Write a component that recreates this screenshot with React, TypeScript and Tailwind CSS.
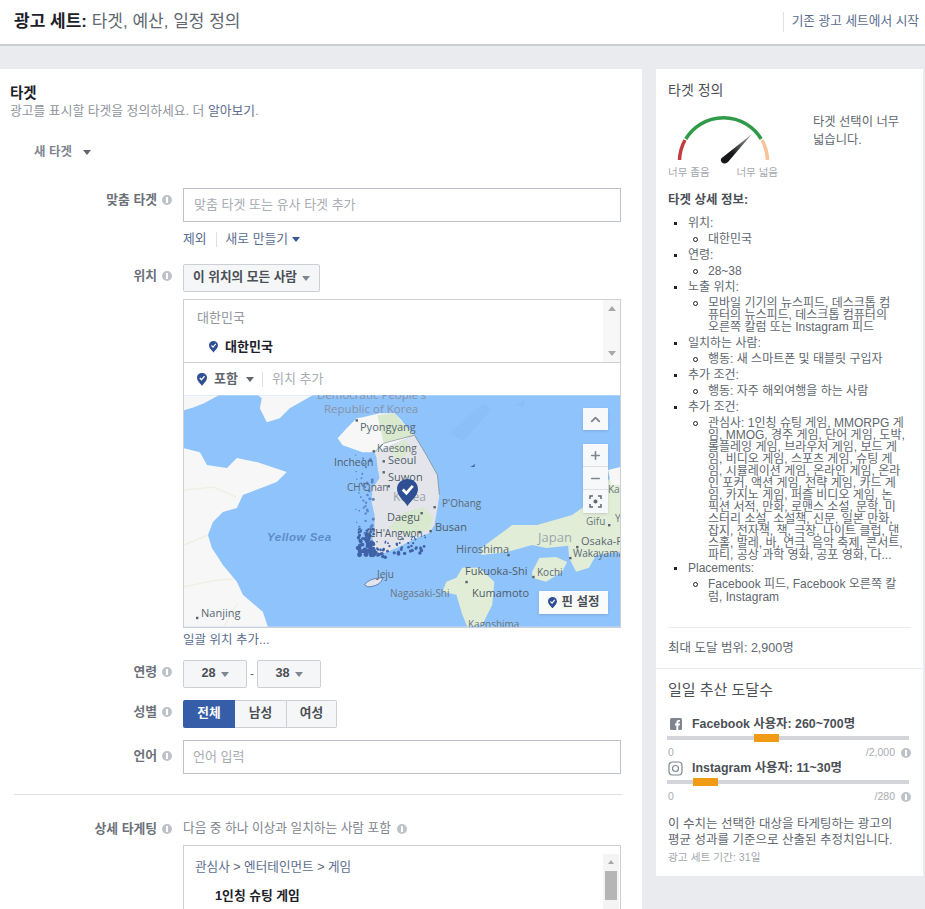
import React from 'react';
import { ChevronUp, Plus, Minus } from 'lucide-react';

const FONT = "font-['Liberation_Sans','Noto_Sans_CJK_KR',sans-serif]";

const Caret = ({ className = 'border-t-[#606770]' }: { className?: string }) => (
  <span className={`inline-block h-0 w-0 border-x-[4.5px] border-t-[5px] border-x-transparent ${className}`} />
);

const Info = ({ className = '' }: { className?: string }) => (
  <span className={`inline-flex h-[10px] w-[10px] shrink-0 items-center justify-center rounded-full bg-[#bec2c9] ${className}`}>
    <span className="h-[6px] w-[2px] bg-white" />
  </span>
);

const Pin = ({ size = 12, color = '#2f4f94' }: { size?: number; color?: string }) => (
  <svg width={size} height={size * 1.3} viewBox="0 0 20 26" className="shrink-0">
    <path d="M10 26 C7.5 21 0 16.5 0 9.5 C0 4 4.5 0 10 0 C15.5 0 20 4 20 9.5 C20 16.5 12.5 21 10 26 Z" fill={color} />
    <path d="M5.5 10 L9 13.5 L15 6.5" fill="none" stroke="#fff" strokeWidth="2.6" />
  </svg>
);

const FieldLabel = ({ text, className = '' }: { text: string; className?: string }) => (
  <div className={`flex w-[173px] shrink-0 items-center justify-end gap-[5px] pr-[11px] text-[12.8px] font-bold text-[#6b7079] ${className}`}>
    <span>{text}</span>
    <Info />
  </div>
);

const SelectButton = ({ text, className = '' }: { text: string; className?: string }) => (
  <div className={`flex h-[28px] items-center justify-center gap-[5px] rounded-[2px] border border-[#ccd0d5] bg-[#f5f6f7] text-[12.7px] font-bold text-[#4b4f56] ${className}`}>
    <span>{text}</span>
    <Caret className="border-t-[#7f8690]" />
  </div>
);

// cy is the vertical centre of the label on the map
const mapLabels = [
  { text: "Democratic People's", x: 133, cy: 1, size: 11.5, color: 'text-[#8793a8]' },
  { text: 'Republic of Korea', x: 140, cy: 15, size: 11.5, color: 'text-[#8793a8]' },
  { text: 'Pyongyang', x: 176, cy: 32, size: 11, color: 'text-[#5a6874]' },
  { text: 'Kaesong', x: 193, cy: 54, size: 10, color: 'text-[#5a6874]' },
  { text: 'Seoul', x: 204, cy: 65, size: 11, color: 'text-[#4f5d68]' },
  { text: 'Incheon', x: 150, cy: 68, size: 10.5, color: 'text-[#4f5d68]' },
  { text: 'Suwon', x: 204, cy: 82, size: 11, color: 'text-[#4f5d68]' },
  { text: "CH'Onan", x: 163, cy: 93, size: 10, color: 'text-[#5a6874]' },
  { text: 'Korea', x: 209, cy: 103, size: 12, color: 'text-[#9aa1ad]' },
  { text: "P'Ohang", x: 258, cy: 109, size: 10, color: 'text-[#5a6874]' },
  { text: 'Daegu', x: 203, cy: 122, size: 11, color: 'text-[#4f5d68]' },
  { text: 'Busan', x: 251, cy: 132, size: 11, color: 'text-[#4f5d68]' },
  { text: "CH'Angwon", x: 185, cy: 139, size: 10, color: 'text-[#4f5d68]' },
  { text: 'Hiroshima', x: 272, cy: 154, size: 11, color: 'text-[#5a6874]' },
  { text: 'Japan', x: 354, cy: 143, size: 13, color: 'text-[#9aa8ac]' },
  { text: 'Osaka-Fu', x: 397, cy: 146, size: 11, color: 'text-[#5a6874]' },
  { text: 'Wakayama', x: 389, cy: 159, size: 10, color: 'text-[#5a6874]' },
  { text: 'Gifu', x: 402, cy: 127, size: 10, color: 'text-[#6a7780]' },
  { text: 'Yo', x: 431, cy: 124, size: 10, color: 'text-[#6a7780]' },
  { text: 'Kanazawa', x: 424, cy: 95, size: 10, color: 'text-[#6a7780]' },
  { text: 'Fukuoka-Shi', x: 281, cy: 176, size: 11, color: 'text-[#4f5d68]' },
  { text: 'Kochi', x: 353, cy: 178, size: 10, color: 'text-[#5a6874]' },
  { text: 'Nagasaki-Shi', x: 206, cy: 199, size: 10, color: 'text-[#6a7780]' },
  { text: 'Kumamoto', x: 288, cy: 198, size: 11, color: 'text-[#4f5d68]' },
  { text: 'Kagoshima', x: 284, cy: 230, size: 10, color: 'text-[#6a7780]' },
  { text: 'Jeju', x: 193, cy: 180, size: 10, color: 'text-[#5a6874]' },
  { text: 'Nanjing', x: 17, cy: 218, size: 11, color: 'text-[#5a6874]' },
];

const mapDots = [
  [173, 25], [190, 56], [200, 66], [200, 77], [205, 91], [238, 118], [251, 112], [247, 136], [236, 137], [13, 223], [283, 187], [325, 160], [394, 152], [387, 163], [350, 182], [426, 130],
];

// scattered islands along the west and south coast of Korea
const islands: number[][] = [];
for (let i = 0; i < 170; i++) {
  const a = Math.abs(Math.sin(i * 12.9898) * 43758.5453) % 1;
  const b = Math.abs(Math.sin(i * 78.233) * 12543.113) % 1;
  if (i < 45) islands.push([172 + a * 18, 60 + b * 80, 0.7 + a * 0.9, 0]);
  else if (i < 115) islands.push([174 + a * 17, 133 + b * 27, 1 + b * 1.5, 1]);
  else islands.push([190 + a * 52, 146 + b * 18 - a * 6, 0.7 + b * 1.1, 1]);
}

const MapBackground = () => (
  <svg viewBox="0 0 437 232" className="absolute inset-0 h-full w-full">
    <rect width="437" height="232" fill="#8fc3fb" />
    {/* china and north korea */}
    <polygon points="0,0 35,0 20,8 10,12 0,15" fill="#f6f7f6" />
    <polygon points="74,0 129,0 106,13 96,23 83,27 76,13 78,3" fill="#f6f7f6" />
    <polygon points="0,53 16,57 23,70 43,73 53,63 73,67 103,77 93,87 59,100 53,113 39,117 29,127 24,140 28,153 39,170 53,187 59,200 79,217 84,232 0,232" fill="#f6f7f6" />
    <path d="M0 95 L30 92 L52 102 M0 150 L24 140 M0 192 L30 186 L50 184 M40 232 L54 208" fill="none" stroke="#edf1e5" strokeWidth="1.5" />
    <polygon points="179,22 196,18 211,18 218,25 224,33 231,40 191,57 179,57 159,50 154,43 163,33 173,23" fill="#f6f7f6" />
    <polygon points="194,20 211,18 224,33 231,40 200,47 197,35" fill="#d9e9cd" />
    {/* south korea */}
    <polygon points="231,40 243,60 254,80 256,100 254,113 251,130 246,138 233,143 213,153 196,160 189,157 189,143 191,133 191,120 188,107 189,93 196,83 194,73 193,63 191,57" fill="#e4e5ea" />
    <polygon points="206,53 222,45 228,55 215,65" fill="#d9e9cd" />
    <polygon points="205,133 220,118 240,112 250,122 246,135 225,140" fill="#d9e9cd" />
    <path d="M191 57 L200 48 L231 40 L243 60 L254 80 L256 100" fill="none" stroke="#76878f" strokeWidth="0.7" />
    {islands.map(([x, y, r, dark], i) => (
      <circle key={i} cx={x} cy={y} r={r} fill={dark ? '#3f62a8' : '#5f86c8'} />
    ))}
    <path d="M181 190 C184 185 192 183 199 183 C199 188 192 192 184 192 Z" fill="#e4e5ea" stroke="#4a6aa8" strokeWidth="0.8" />
    <path d="M287 72 L292 69 L291 72 Z" fill="#3f62a8" />
    {/* japan */}
    <polygon points="298,153 306,147 329,130 354,130 389,120 399,113 437,73 437,157 413,157 393,150 363,153 349,150 324,157 298,160" fill="#e1edd7" />
    <polygon points="385,150 437,148 437,157 413,160 406,173 393,177 386,163" fill="#e1edd7" />
    <polygon points="349,177 356,163 373,162 384,167 379,177 363,187 349,183" fill="#e1edd7" />
    <polygon points="273,183 279,173 296,173 311,187 309,210 299,230 284,232 279,220 273,200 259,197 263,187" fill="#e1edd7" />
    <polygon points="425,75 437,72 437,90 428,90" fill="#f6f7f6" />
    <path d="M266 38 L300 8 L308 14 L280 46 Z M332 10 L342 4 L340 12 Z" fill="#8abff8" />
    {mapDots.map(([x, y], i) => (
      <rect key={i} x={x - 1} y={y - 1} width="2.4" height="2.4" fill="#56646e" />
    ))}
  </svg>
);

const detailItems: { title: string; lines: string[]; tight?: boolean; loose?: boolean }[] = [
  { title: '위치:', lines: ['대한민국'] },
  { title: '연령:', lines: ['28~38'] },
  { title: '노출 위치:', lines: ['모바일 기기의 뉴스피드, 데스크톱 컴', '퓨터의 뉴스피드, 데스크톱 컴퓨터의', '오른쪽 칼럼 또는 Instagram 피드'] },
  { title: '일치하는 사람:', lines: ['행동: 새 스마트폰 및 태블릿 구입자'] },
  { title: '추가 조건:', lines: ['행동: 자주 해외여행을 하는 사람'] },
  {
    title: '추가 조건:',
    tight: true,
    lines: [
      '관심사: 1인칭 슈팅 게임, MMORPG 게',
      '임, MMOG, 경주 게임, 단어 게임, 도박,',
      '롤플레잉 게임, 브라우저 게임, 보드 게',
      '임, 비디오 게임, 스포츠 게임, 슈팅 게',
      '임, 시뮬레이션 게임, 온라인 게임, 온라',
      '인 포커, 액션 게임, 전략 게임, 카드 게',
      '임, 카지노 게임, 퍼즐 비디오 게임, 논',
      '픽션 서적, 만화, 로맨스 소설, 문학, 미',
      '스터리 소설, 소설책, 신문, 일본 만화,',
      '잡지, 전자책, 책, 극장, 나이트 클럽, 댄',
      '스홀, 발레, 바, 연극, 음악 축제, 콘서트,',
      '파티, 공상 과학 영화, 공포 영화, 다...',
    ],
  },
  { title: 'Placements:', loose: true, lines: ['Facebook 피드, Facebook 오른쪽 칼', '럼, Instagram'] },
];

const App = () => (
  <div className={`${FONT} h-[909px] w-[925px] overflow-hidden bg-[#e9ebee]`}>
    {/* Top bar */}
    <div className="flex h-[46px] items-center justify-between border-b-2 border-[#c9ccd1] bg-white pl-[14px] pr-[6px]">
      <div className="text-[17px] text-[#606770]">
        <span className="font-bold text-[#1d2129]">광고 세트:</span> 타겟, 예산, 일정 정의
      </div>
      <div className="border-l border-[#dddfe2] pl-[8px] text-[12.7px] text-[#5b6d8f]">기존 광고 세트에서 시작</div>
    </div>

    <div className="mt-[23px] flex items-start">
      {/* Left panel */}
      <div className="h-[840px] w-[642px] shrink-0 overflow-hidden bg-white pl-[10px] pt-[15px]">
        <div className="text-[14.5px] font-bold leading-[18px] text-[#1d2129]">타겟</div>
        <div className="mt-[1px] text-[12.8px] leading-[16px] text-[#90949c]">
          광고를 표시할 타겟을 정의하세요. 더 <span className="text-[#5b6d8f]">알아보기</span>.
        </div>
        <div className="mt-[25px] flex items-center gap-[11px] pl-[24px] text-[12.5px] font-bold leading-[16px] text-[#7f8690]">
          <span>새 타겟</span>
          <Caret className="border-t-[#606770]" />
        </div>

        {/* Custom audience */}
        <div className="mt-[28px] flex">
          <FieldLabel text="맞춤 타겟" className="h-[24px]" />
          <div className="w-[438px]">
            <div className="flex h-[34px] items-center border border-[#bdc1c9] bg-white pl-[10px] text-[13px] text-[#a8acb3]">맞춤 타겟 또는 유사 타겟 추가</div>
            <div className="mt-[9px] flex items-center text-[12.8px] leading-[16px] text-[#5b6d8f]">
              <span>제외</span>
              <span className="mx-[9px] h-[15px] w-px bg-[#dddfe2]" />
              <span className="mr-[4px]">새로 만들기</span>
              <Caret className="border-t-[#365899]" />
            </div>
          </div>
        </div>

        {/* Location */}
        <div className="mt-[17px] flex">
          <FieldLabel text="위치" className="h-[24px]" />
          <div className="w-[438px]">
            <SelectButton text="이 위치의 모든 사람" className="w-[137px]" />
            <div className="mt-[7px] border border-[#ccd0d5] bg-white">
              <div className="relative h-[63px] border-b border-[#ccd0d5]">
                <div className="pl-[13px] pt-[10px] text-[13px] leading-[16px] text-[#90949c]">대한민국</div>
                <div className="mt-[13px] flex items-center gap-[7px] pl-[25px] text-[13px] font-bold leading-[16px] text-[#1d2129]">
                  <Pin size={9} />
                  <span>대한민국</span>
                </div>
                <div className="absolute inset-y-0 right-0 flex w-[17px] flex-col items-center justify-between bg-[#f7f7f7] py-[6px]">
                  <span className="h-0 w-0 border-x-[4px] border-b-[5px] border-x-transparent border-b-[#a8a8a8]" />
                  <span className="h-0 w-0 border-x-[4px] border-t-[5px] border-x-transparent border-t-[#a8a8a8]" />
                </div>
              </div>
              <div className="flex h-[32px] items-center pl-[13px] text-[13px]">
                <Pin size={10} />
                <span className="ml-[7px] font-bold text-[#606770]">포함</span>
                <span className="ml-[8px] flex"><Caret className="border-t-[#606770]" /></span>
                <span className="ml-[8px] mr-[9px] h-[15px] w-px bg-[#dddfe2]" />
                <span className="text-[#a8acb3]">위치 추가</span>
              </div>
              <div className="relative h-[232px] overflow-hidden">
                <MapBackground />
                {mapLabels.map((l) => (
                  <span
                    key={l.text}
                    className={`absolute whitespace-nowrap leading-none ${l.color}`}
                    style={{ left: l.x, top: l.cy - l.size / 2 - 1, fontSize: l.size, fontFamily: "'Open Sans', sans-serif" }}
                  >
                    {l.text}
                  </span>
                ))}
                <span className="absolute left-[83px] top-[137px] whitespace-nowrap text-[11.5px] font-bold italic leading-none tracking-[0.5px] text-[#5d8cc9]">Yellow Sea</span>
                <div className="absolute left-[213px] top-[84px]"><Pin size={21} /></div>
                <div className="absolute left-[399px] top-[13px] flex h-[22px] w-[25px] items-center justify-center bg-[#f7f8f9] shadow-sm">
                  <ChevronUp size={15} strokeWidth={3} className="text-[#7f8690]" />
                </div>
                <div className="absolute left-[399px] top-[49px] flex w-[25px] flex-col divide-y divide-[#dddfe2] bg-[#f7f8f9] shadow-sm">
                  <div className="flex h-[23px] items-center justify-center"><Plus size={13} strokeWidth={3} className="text-[#7f8690]" /></div>
                  <div className="flex h-[23px] items-center justify-center"><Minus size={13} strokeWidth={3} className="text-[#7f8690]" /></div>
                  <div className="flex h-[23px] items-center justify-center">
                    <svg width="13" height="13" viewBox="0 0 13 13" fill="none" stroke="#606770" strokeWidth="1.5">
                      <path d="M1 4V1H4M9 1H12V4M12 9V12H9M4 12H1V9" />
                      <circle cx="6.5" cy="6.5" r="2" fill="#606770" stroke="none" />
                    </svg>
                  </div>
                </div>
                <div className="absolute left-[355px] top-[196px] flex h-[23px] w-[69px] items-center justify-center gap-[5px] bg-[#f9fafa] text-[12.5px] font-bold text-[#4b4f56] shadow-sm">
                  <Pin size={9} />
                  <span>핀 설정</span>
                </div>
              </div>
            </div>
            <div className="mt-[5px] text-[12.5px] leading-[14px] text-[#5b6d8f]">일괄 위치 추가...</div>
          </div>
        </div>

        {/* Age */}
        <div className="mt-[13px] flex">
          <FieldLabel text="연령" className="h-[24px]" />
          <div className="flex items-center">
            <SelectButton text="28" className="w-[64px]" />
            <span className="mx-[3px] w-[4px] text-[12px] text-[#606770]">-</span>
            <SelectButton text="38" className="w-[64px]" />
          </div>
        </div>

        {/* Gender */}
        <div className="mt-[12px] flex">
          <FieldLabel text="성별" className="h-[24px]" />
          <div className="flex h-[28px] overflow-hidden rounded-[2px] text-[12.7px] font-bold">
            <div className="flex w-[52px] items-center justify-center bg-[#365da8] text-white">전체</div>
            <div className="flex w-[51px] items-center justify-center border-y border-[#ccd0d5] bg-[#f5f6f7] text-[#4b4f56]">남성</div>
            <div className="flex w-[51px] items-center justify-center border border-[#ccd0d5] bg-[#f5f6f7] text-[#4b4f56]">여성</div>
          </div>
        </div>

        {/* Language */}
        <div className="mt-[12px] flex">
          <FieldLabel text="언어" className="h-[32px]" />
          <div className="flex h-[34px] w-[438px] items-center border border-[#bdc1c9] bg-white pl-[9px] text-[13px] text-[#a8acb3]">언어 입력</div>
        </div>

        <div className="ml-[4px] mt-[20px] h-px w-[608px] bg-[#dddfe2]" />

        {/* Detailed targeting */}
        <div className="mt-[26px] flex">
          <FieldLabel text="상세 타게팅" className="h-[16px]" />
          <div className="w-[438px]">
            <div className="flex h-[16px] items-center gap-[6px] text-[12.7px] text-[#7f8690]">
              <span>다음 중 하나 이상과 일치하는 사람 포함</span>
              <Info />
            </div>
            <div className="relative mt-[8px] h-[80px] border border-[#ccd0d5] bg-white pl-[11px] pt-[13px]">
              <div className="text-[12.6px] leading-[16px] text-[#5b6d8f]">
                <span>관심사</span> <span className="text-[#606770]">&gt;</span> 엔터테인먼트 <span className="text-[#606770]">&gt;</span> 게임
              </div>
              <div className="mt-[13px] pl-[20px] text-[12.8px] font-bold leading-[16px] text-[#1d2129]">1인칭 슈팅 게임</div>
              <div className="absolute bottom-0 right-[1px] top-[8px] w-[16px] bg-[#f4f4f4] pt-[6px]">
                <span className="mx-auto block h-0 w-0 border-x-[3.5px] border-b-[4px] border-x-transparent border-b-[#a8a8a8]" />
                <div className="mx-auto mt-[7px] h-[29px] w-[12px] bg-[#b5b5b5]" />
              </div>
            </div>
          </div>
        </div>
      </div>

      {/* Right panel */}
      <div className="ml-[14px] w-[267px] shrink-0 bg-white">
        <div className="px-[12px] pt-[13px]">
          <div className="text-[14px] leading-[16px] text-[#4b4f56]">타겟 정의</div>
          <div className="mt-[12px] flex">
            <div className="w-[145px] shrink-0">
              <svg width="110" height="56" viewBox="0 0 110 56">
                <defs>
                  <linearGradient id="needle" x1="0" y1="1" x2="1" y2="0">
                    <stop offset="0.35" stopColor="#17181a" />
                    <stop offset="1" stopColor="#a8acb3" />
                  </linearGradient>
                </defs>
                <path d="M11.5 50 A44 44 0 0 1 17 30" fill="none" stroke="#c33b3f" strokeWidth="3.5" />
                <path d="M17.8 29 A44 44 0 0 1 93.2 29" fill="none" stroke="#2f9a47" strokeWidth="3.5" />
                <path d="M94 30 A44 44 0 0 1 99.5 50" fill="none" stroke="#f7c497" strokeWidth="3.5" />
                <path d="M84 24 L60 52 Q56 55 53.5 52 Q51.500 49 55 47 Z" fill="url(#needle)" />
              </svg>
              <div className="flex w-[110px] justify-between text-[10.5px] leading-[12px] text-[#a4a7ad]">
                <span>너무 좁음</span>
                <span>너무 넓음</span>
              </div>
            </div>
            <div className="mt-[3px] text-[12.3px] leading-[18px] text-[#606770]">
              <div>타겟 선택이 너무</div>
              <div>넓습니다.</div>
            </div>
          </div>

          <div className="mt-[14px] text-[12.5px] font-bold leading-[16px] text-[#4b4f56]">타겟 상세 정보:</div>
          <ul className="mt-[9px] text-[12px] leading-[12px] text-[#606770]">
            {detailItems.map((item, i) => (
              <li key={i} className="relative pl-[20px]">
                <span className="absolute left-[6px] top-[5px] h-[3px] w-[3px] bg-[#1d2129]" />
                <div className="pb-[4px]">{item.title}</div>
                <div className={`relative pl-[20px] ${item.tight ? 'pb-[1px]' : 'pb-[4px]'} ${item.loose ? 'leading-[13px]' : ''}`}>
                  <span className="absolute left-[5px] top-[4px] h-[5px] w-[5px] rounded-full border border-[#1d2129]" />
                  {item.lines.map((line) => (
                    <div key={line} className="whitespace-nowrap">{line}</div>
                  ))}
                </div>
              </li>
            ))}
          </ul>
          <div className="mt-[19px] border-t border-[#e9ebee] pb-[12px] pt-[12px] text-[12.5px] leading-[16px] text-[#606770]">최대 도달 범위: 2,900명</div>
        </div>

        <div className="border-t border-[#e9ebee] pb-[12px] pl-[12px] pr-[14px] pt-[12px]">
          <div className="text-[15px] leading-[18px] text-[#4b4f56]">일일 추산 도달수</div>
          <div className="mt-[17px] flex h-[16px] items-center gap-[10px] text-[12.4px] font-bold text-[#4b4f56]">
            <svg width="12" height="12" viewBox="0 0 12 12" className="ml-[2px] shrink-0">
              <rect width="12" height="12" rx="1.5" fill="#7f8690" />
              <path d="M8.3 12V7.4H9.8L10 5.6H8.3V4.6C8.3 4 8.5 3.7 9.2 3.7H10V2.2C9.7 2.1 9.2 2.1 8.7 2.1C7.3 2.1 6.4 2.9 6.4 4.4V5.6H5V7.4H6.4V12Z" fill="#fff" />
            </svg>
            <span>Facebook 사용자: 260~700명</span>
          </div>
          <div className="relative -ml-[1px] mt-[4px] h-[4px] bg-[#d3d5da]">
            <div className="absolute -top-[2px] left-[87px] h-[8px] w-[25px] bg-[#f09b13]" />
          </div>
          <div className="mt-[6px] flex items-center justify-between text-[10.5px] leading-[13px] text-[#a8acb3]">
            <span>0</span>
            <span className="-mr-[2px] flex items-center gap-[6px]">/2,000 <Info /></span>
          </div>
          <div className="mt-[1px] flex h-[16px] items-center gap-[9px] text-[12.4px] font-bold text-[#4b4f56]">
            <svg width="15" height="15" viewBox="0 0 15 15" fill="none" stroke="#7f8690" className="shrink-0">
              <rect x="1" y="1" width="13" height="13" rx="3.5" strokeWidth="1.2" />
              <circle cx="7.5" cy="7.5" r="3" strokeWidth="1.2" />
            </svg>
            <span>Instagram 사용자: 11~30명</span>
          </div>
          <div className="relative -ml-[1px] mt-[4px] h-[4px] bg-[#d3d5da]">
            <div className="absolute -top-[2px] left-[26px] h-[8px] w-[25px] bg-[#f09b13]" />
          </div>
          <div className="mt-[6px] flex items-center justify-between text-[10.5px] leading-[13px] text-[#a8acb3]">
            <span>0</span>
            <span className="-mr-[2px] flex items-center gap-[6px]">/280 <Info /></span>
          </div>
          <div className="mt-[13px] whitespace-nowrap text-[12.5px] leading-[16px] text-[#606770]">
            <div>이 수치는 선택한 대상을 타게팅하는 광고의</div>
            <div>평균 성과를 기준으로 산출된 추정치입니다.</div>
          </div>
          <div className="mt-[3px] text-[10.7px] leading-[13px] text-[#a4a7ad]">광고 세트 기간: 31일</div>
        </div>
      </div>
    </div>
  </div>
);

export default App;
